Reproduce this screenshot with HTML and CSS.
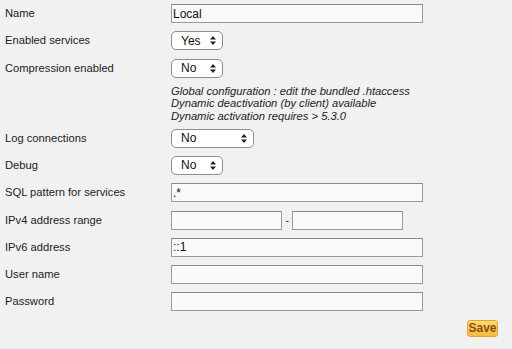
FILE: index.html
```html
<!DOCTYPE html>
<html lang="en">
<head>
    <meta charset="UTF-8">
    <title>Server configuration</title>
    <link rel="stylesheet" href="styles.css">
</head>
<body>

<form class="config-form">
    <label class="field-label" for="name">Name</label>
    <div class="field"><input type="text" id="name" class="text-input" value="Local"></div>

    <label class="field-label" for="enabled">Enabled services</label>
    <div class="field">
        <span class="select-wrap w-small">
            <select id="enabled" class="select-box"><option>Yes</option><option>No</option></select>
            <svg class="select-arrow" width="6" height="9" viewBox="0 0 6 9"><path d="M3 0 L6 3.5 H0 Z M3 9 L6 5.5 H0 Z" fill="#222"/></svg>
        </span>
    </div>

    <label class="field-label" for="compression">Compression enabled</label>
    <div class="field">
        <span class="select-wrap w-small">
            <select id="compression" class="select-box"><option>No</option><option>Yes</option></select>
            <svg class="select-arrow" width="6" height="9" viewBox="0 0 6 9"><path d="M3 0 L6 3.5 H0 Z M3 9 L6 5.5 H0 Z" fill="#222"/></svg>
        </span>
    </div>

    <div></div>
    <div class="note">
        Global configuration : edit the bundled .htaccess<br>
        Dynamic deactivation (by client) available<br>
        Dynamic activation requires &gt; 5.3.0
    </div>

    <label class="field-label" for="log">Log connections</label>
    <div class="field">
        <span class="select-wrap w-wide">
            <select id="log" class="select-box"><option>No</option><option>Yes</option></select>
            <svg class="select-arrow" width="6" height="9" viewBox="0 0 6 9"><path d="M3 0 L6 3.5 H0 Z M3 9 L6 5.5 H0 Z" fill="#222"/></svg>
        </span>
    </div>

    <label class="field-label" for="debug">Debug</label>
    <div class="field">
        <span class="select-wrap w-small">
            <select id="debug" class="select-box"><option>No</option><option>Yes</option></select>
            <svg class="select-arrow" width="6" height="9" viewBox="0 0 6 9"><path d="M3 0 L6 3.5 H0 Z M3 9 L6 5.5 H0 Z" fill="#222"/></svg>
        </span>
    </div>

    <label class="field-label" for="sql">SQL pattern for services</label>
    <div class="field"><input type="text" id="sql" class="text-input" value=".*"></div>

    <label class="field-label" for="ipv4from">IPv4 address range</label>
    <div class="field range">
        <input type="text" id="ipv4from" class="text-input half">
        <span class="dash">-</span>
        <input type="text" class="text-input half">
    </div>

    <label class="field-label" for="ipv6">IPv6 address</label>
    <div class="field"><input type="text" id="ipv6" class="text-input" value="::1"></div>

    <label class="field-label" for="user">User name</label>
    <div class="field"><input type="text" id="user" class="text-input"></div>

    <label class="field-label" for="pass">Password</label>
    <div class="field"><input type="password" id="pass" class="text-input"></div>

    <div class="actions">
        <button type="button" class="save-button">Save</button>
    </div>
</form>

</body>
</html>
```

FILE: styles.css
```css
* {
    margin: 0;
    padding: 0;
    box-sizing: border-box;
}

body {
    font-family: "Liberation Sans", Arial, sans-serif;
    font-size: 11.2px;
    color: #222;
    background-color: #f1f1f1;
    padding: 4px 14px 0 5px;
}

.config-form {
    display: grid;
    grid-template-columns: 166px 1fr;
    row-gap: 8.3px;
    align-items: center;
}

.field-label {
    line-height: 19px;
}

.field {
    display: flex;
    align-items: center;
    height: 19px;
}

.text-input {
    width: 252px;
    height: 19px;
    border: 1px solid #9a9a9a;
    border-top-color: #8a8a8a;
    background-color: #fafafa;
    font-family: "Liberation Sans", Arial, sans-serif;
    font-size: 12px;
    color: #111;
    padding: 0 1px;
    outline: none;
}

.text-input.half {
    width: 111px;
}

.range .dash {
    width: 10px;
    text-align: center;
    color: #333;
}

.select-wrap {
    position: relative;
    display: inline-block;
    height: 19px;
}

.w-small {
    width: 52px;
}

.w-wide {
    width: 83px;
}

.select-box {
    -webkit-appearance: none;
    appearance: none;
    width: 100%;
    height: 19px;
    border: 1px solid #8e8e8e;
    border-radius: 5px;
    background-color: #fff;
    font-family: "Liberation Sans", Arial, sans-serif;
    font-size: 12px;
    color: #111;
    padding: 0 0 0 9px;
    outline: none;
}

.select-arrow {
    position: absolute;
    right: 7px;
    top: 5px;
    pointer-events: none;
}

.note {
    font-style: italic;
    line-height: 12.5px;
    color: #222;
    margin: -1px 0 -2px;
}

.actions {
    grid-column: 1 / 3;
    display: flex;
    justify-content: flex-end;
}

.save-button {
    width: 31px;
    height: 17px;
    border: 1px solid #e2a53a;
    border-radius: 3px;
    background: linear-gradient(#ffd978, #f8b93c);
    font-family: "Liberation Sans", Arial, sans-serif;
    font-weight: bold;
    font-size: 12px;
    color: #8a4e0c;
    line-height: 15px;
}
```
